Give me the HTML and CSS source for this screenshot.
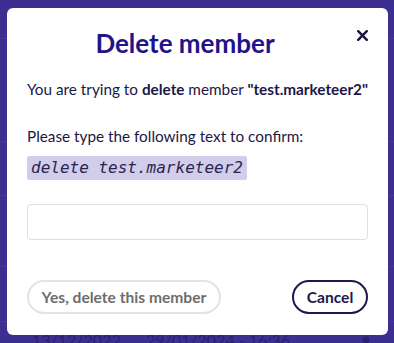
FILE: index.html
```html
<!DOCTYPE html>
<html>
<head>
<meta charset="utf-8">
<link rel="stylesheet" href="styles.css">
</head>
<body>
<div class="backdrop">
  <div class="row r1"></div>
  <div class="row r2"></div>
  <div class="row r3"></div>
  <div class="row r4"></div>
  <div class="row r5"></div>
  <div class="row last">
    <span class="cell c1">13/12/2022</span>
    <span class="cell c2">29/01/2024 - 16:36</span>
    <span class="cell c3">
      <svg width="16" height="14" viewBox="0 0 16 14"><circle cx="8" cy="4" r="3.5" fill="#2a1f72"/><path d="M1 14c0-4 3-6 7-6s7 2 7 6z" fill="#2a1f72"/></svg>
    </span>
  </div>
</div>
<div class="modal">
  <div class="header">
    <h1 class="title">Delete member</h1>
    <button class="close" aria-label="Close">
      <svg width="11" height="11" viewBox="0 0 11 11"><path d="M1.2 1.2L9.8 9.8M9.8 1.2L1.2 9.8" stroke="#1a1440" stroke-width="2.4" stroke-linecap="round"/></svg>
    </button>
  </div>
  <p class="text line1">You are trying to <b>delete</b> member <b>"test.marketeer2"</b></p>
  <p class="text confirm">Please type the following text to confirm:</p>
  <code class="code">delete test.marketeer2</code>
  <input class="input" type="text">
  <div class="actions">
    <button class="btn btn-disabled">Yes, delete this member</button>
    <button class="btn btn-cancel">Cancel</button>
  </div>
</div>
</body>
</html>
```
FILE: styles.css
```css
html, body {
  margin: 0;
  padding: 0;
}
body {
  width: 394px;
  height: 343px;
  overflow: hidden;
  background: #3d2f8f;
  font-family: Lato, "Open Sans", sans-serif;
  position: relative;
}
.backdrop {
  display: flex;
  flex-direction: column;
}
.row {
  border-bottom: 1px solid #45389a;
}
.r1 { height: 38px; }
.r2 { height: 102px; }
.r3 { height: 53px; }
.r4 { height: 70px; }
.r5 { height: 54px; }
.row.last {
  border: none;
  height: 30px;
  padding-top: 8px;
  display: flex;
  align-items: flex-start;
  color: #2a1f72;
  font-size: 16px;
  line-height: 20px;
}
.c1 { margin-left: 32px; width: 114px; }
.c2 { width: 212px; }
.c3 { padding-top: 4px; }

.modal {
  position: absolute;
  left: 7px;
  top: 8px;
  width: 381px;
  height: 327px;
  box-sizing: border-box;
  padding: 0 20px;
  background: #fff;
  border-radius: 6px;
  display: flex;
  flex-direction: column;
  color: #1c1745;
}
.header {
  display: flex;
  align-items: flex-start;
  padding-top: 18px;
}
.title {
  flex: 1;
  margin: 0;
  text-align: center;
  font-size: 26px;
  font-weight: 700;
  color: #21148a;
  line-height: 34px;
}
.close {
  width: 25px;
  height: 14px;
  margin-top: 2px;
  padding: 0;
  border: none;
  background: none;
  display: flex;
  align-items: center;
  justify-content: flex-end;
}
.text {
  margin: 0;
  font-size: 15.3px;
  line-height: 20px;
  white-space: nowrap;
}
.text b { font-weight: 700; }
.line1 { margin-top: 19px; }
.confirm { margin-top: 27px; }
.code {
  align-self: flex-start;
  margin-top: 10px;
  background: #d2cdea;
  border-radius: 2px;
  padding: 2px 4px;
  font-family: "DejaVu Sans Mono", monospace;
  font-style: italic;
  font-size: 16px;
  line-height: 20px;
  letter-spacing: 0;
  color: #2a2550;
}
.input {
  margin-top: 24px;
  height: 36px;
  box-sizing: border-box;
  border: 1px solid #dedede;
  border-radius: 4px;
  width: 100%;
}
.actions {
  margin-top: 40px;
  display: flex;
  justify-content: space-between;
}
.btn {
  height: 34px;
  box-sizing: border-box;
  border-radius: 17px;
  font-family: Lato, sans-serif;
  font-size: 15.6px;
  font-weight: 700;
  background: #fff;
  padding: 0;
}
.btn-disabled {
  border: 2px solid #e3e3e3;
  color: #6e6e6e;
  width: 194px;
}
.btn-cancel {
  border: 2px solid #1d174f;
  color: #1d174f;
  width: 76px;
}
```
